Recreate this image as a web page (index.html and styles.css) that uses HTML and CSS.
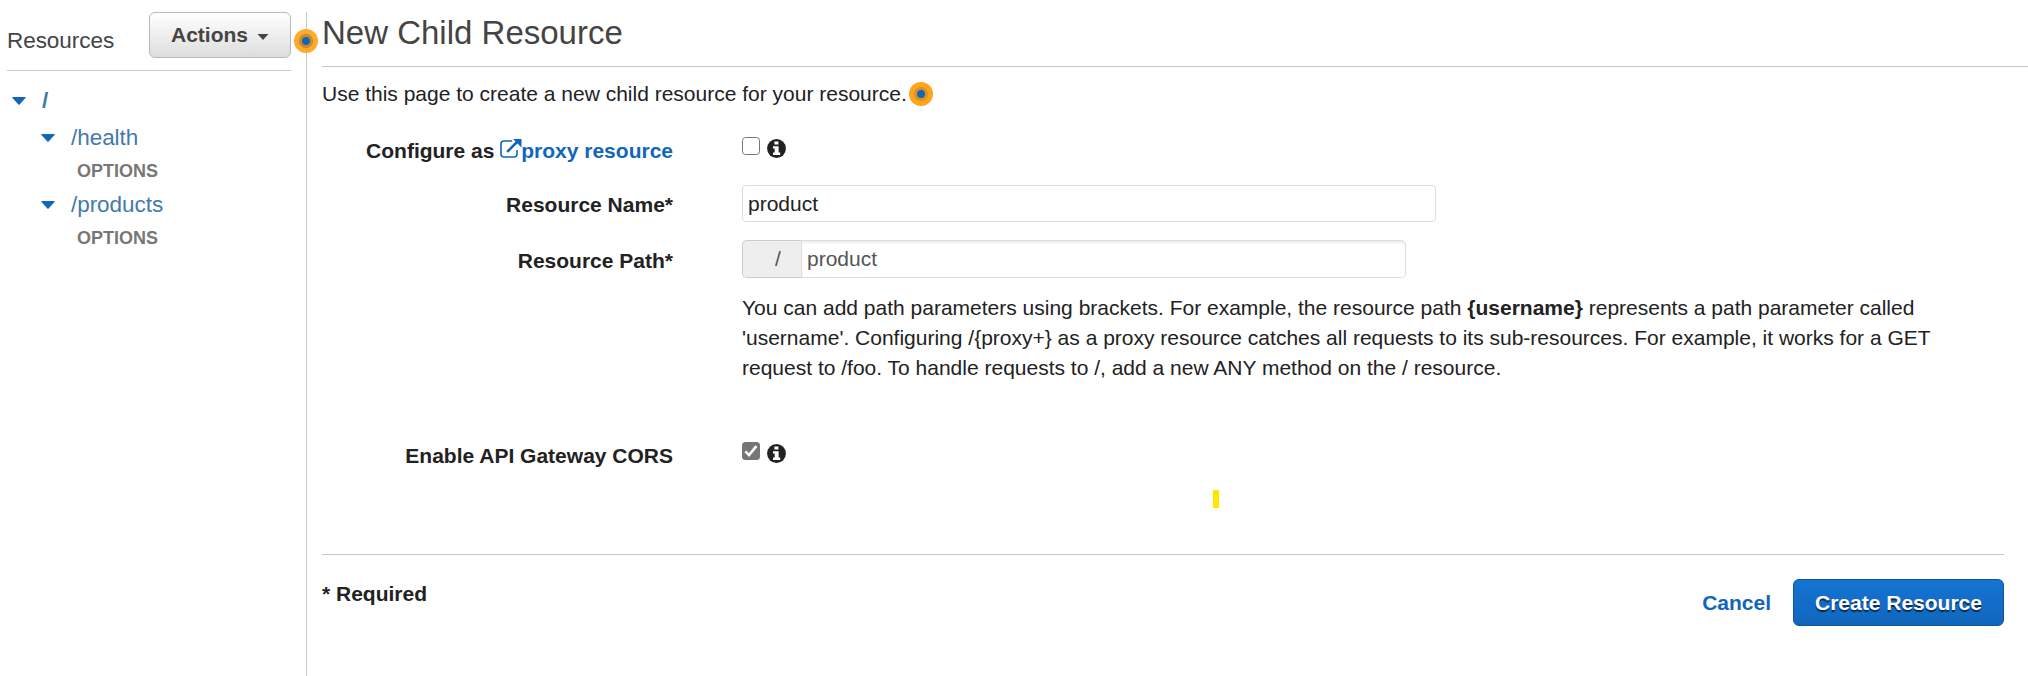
FILE: index.html
```html
<!DOCTYPE html>
<html lang="en">
<head>
<meta charset="utf-8">
<title>New Child Resource</title>
<link rel="stylesheet" href="styles.css">
</head>
<body>
<div class="app">
  <aside class="sidebar">
    <header class="sidebar-head">
      <span class="sidebar-title">Resources</span>
      <button class="actions" type="button">Actions <svg class="actions-caret" viewBox="0 0 12 6"><path d="M0.5 0h11L6 6z"/></svg></button>
    </header>
    <ul class="tree">
      <li class="node root"><svg class="caret" viewBox="0 0 14 8"><path d="M0.8 0h12.4q1 0 .3 .9L7.6 7.4q-.6.6-1.2 0L.5.9Q-.2 0 .8 0z"/></svg><span>/</span></li>
      <li class="node child"><svg class="caret" viewBox="0 0 14 8"><path d="M0.8 0h12.4q1 0 .3 .9L7.6 7.4q-.6.6-1.2 0L.5.9Q-.2 0 .8 0z"/></svg><span>/health</span></li>
      <li class="method">OPTIONS</li>
      <li class="node child"><svg class="caret" viewBox="0 0 14 8"><path d="M0.8 0h12.4q1 0 .3 .9L7.6 7.4q-.6.6-1.2 0L.5.9Q-.2 0 .8 0z"/></svg><span>/products</span></li>
      <li class="method">OPTIONS</li>
    </ul>
  </aside>
  <main class="main">
    <svg class="hotspot hotspot-edge" viewBox="0 0 24 24"><circle cx="12" cy="12" r="12" fill="#ffa92d"/><circle cx="12" cy="12" r="7.2" fill="#c98c2b"/><circle cx="12" cy="12" r="4" fill="#1166bb"/></svg>
    <h1 class="title">New Child Resource</h1>
    <p class="intro">Use this page to create a new child resource for your resource.<svg class="hotspot" viewBox="0 0 24 24"><circle cx="12" cy="12" r="12" fill="#ffa41c"/><circle cx="12" cy="12" r="7" fill="#dc9120"/><circle cx="12" cy="12" r="4" fill="#1166bb"/></svg></p>
    <form class="form">
      <div class="row row-proxy">
        <div class="label">Configure as <a class="link"><svg class="ext" viewBox="0 0 22 19"><path d="M12 2H4Q1 2 1 5v10q0 3 3 3h10q3 0 3-3v-4" fill="none" stroke="currentColor" stroke-width="1.6"/><path d="M7.2 12.8L17 3" fill="none" stroke="currentColor" stroke-width="2.6"/><path d="M13 0H21.5v8.5z" fill="currentColor"/></svg>proxy resource</a></div>
        <div class="checks"><span class="box"></span><svg class="info" viewBox="0 0 19 19"><circle cx="9.5" cy="9.5" r="9.4" fill="#222"/><path d="M7.4 2.4h4v3.2h-4zM6 7.2h5.6v6.2h1.6v2.6H6v-2.6h1.7V9.6H6z" fill="#fff"/></svg></div>
      </div>
      <div class="row row-name">
        <div class="label">Resource Name*</div>
        <div class="input">product</div>
      </div>
      <div class="row row-path">
        <div class="label">Resource Path*</div>
        <div class="group"><span class="addon">/</span><div class="input path">product</div></div>
      </div>
      <p class="help">You can add path parameters using brackets. For example, the resource path <b>{username}</b> represents a path parameter called 'username'. Configuring /{proxy+} as a proxy resource catches all requests to its sub-resources. For example, it works for a GET request to /foo. To handle requests to /, add a new ANY method on the / resource.</p>
      <div class="row row-cors">
        <div class="label">Enable API Gateway CORS</div>
        <div class="checks"><span class="box checked"><svg viewBox="0 0 18 18"><path d="M3.4 9.4l3.6 3.7 7.4-9" fill="none" stroke="#fff" stroke-width="2.6"/></svg></span><svg class="info" viewBox="0 0 19 19"><circle cx="9.5" cy="9.5" r="9.4" fill="#222"/><path d="M7.4 2.4h4v3.2h-4zM6 7.2h5.6v6.2h1.6v2.6H6v-2.6h1.7V9.6H6z" fill="#fff"/></svg></div>
      </div>
      <div class="mark"></div>
      <footer class="footer">
        <span class="required">* Required</span>
        <div class="buttons"><a class="link">Cancel</a><button class="create" type="button">Create Resource</button></div>
      </footer>
    </form>
  </main>
</div>
</body>
</html>
```
FILE: styles.css
```css
* { box-sizing: border-box; }
body {
  margin: 0;
  background: #fff;
  color: #222;
  font: 21px/30px "Liberation Sans", Arial, sans-serif;
}
svg { display: block; flex: none; }
button { font: inherit; font-weight: bold; margin: 0; }
.app { display: flex; height: 676px; padding-top: 12px; overflow: hidden; }

.sidebar { flex: none; width: 306px; padding: 0 15px 0 7px; }
.sidebar-head {
  display: flex;
  justify-content: space-between;
  height: 59px;
  border-bottom: 1px solid #c8c8c8;
}
.sidebar-title { font-size: 22.5px; letter-spacing: -0.05px; color: #444; padding-top: 14px; }
.actions {
  display: flex;
  align-items: center;
  gap: 10px;
  width: 142px;
  height: 46px;
  padding: 0 0 0 21px;
  color: #444;
  border: 1px solid #b8b8b8;
  border-radius: 6px;
  background: linear-gradient(#fff, #ddd);
}
.actions-caret { width: 12px; height: 6px; fill: #444; margin: 3px 0 0 -1px; }

.tree { list-style: none; margin: 12px 0 0; padding: 0; }
.node {
  display: flex;
  gap: 16px;
  height: 35px;
  font-size: 22.5px;
  line-height: 35px;
  color: #4479ab;
}
.root { height: 37px; padding-left: 5px; font-weight: bold; }
.child { padding-left: 34px; letter-spacing: -0.05px; }
.caret { width: 14px; height: 8px; margin-top: 14px; fill: #1166bb; }
.method {
  height: 32px;
  padding-left: 70px;
  font-size: 18px;
  line-height: 32px;
  font-weight: bold;
  color: #777;
}

.main {
  position: relative;
  flex: 1;
  padding-left: 15px;
  border-left: 1px solid #c8c8c8;
}
.hotspot { width: 24px; height: 24px; }
.hotspot-edge { position: absolute; left: -13px; top: 17px; }
.title {
  height: 55px;
  margin: 0;
  border-bottom: 1px solid #c8c8c8;
  font-size: 33px;
  line-height: 42px;
  font-weight: normal;
  color: #444;
}
.intro { display: flex; align-items: center; gap: 2px; margin: 12px 0 0; }
.form { width: 1682px; margin-top: 26px; }
.row { display: flex; gap: 69px; }
.label { flex: none; width: 351px; padding-top: 1px; text-align: right; font-weight: bold; }
.link { color: #1166bb; font-weight: bold; }
.ext { display: inline-block; width: 22px; height: 19px; margin-right: -1px; vertical-align: 0; }
.row-proxy { height: 50px; }
.row-name { height: 55px; }
.row-path { height: 53px; }
.row-name .label { padding-top: 5px; }
.row-path .label { padding-top: 6px; }
.checks { display: flex; gap: 7px; padding-top: 2px; }
.box {
  width: 18px;
  height: 18px;
  border: 1.5px solid #767676;
  border-radius: 3.5px;
}
.checked { border: 0; background: #767676; }
.info { width: 19px; height: 19px; margin-top: 2px; }
.input {
  width: 694px;
  height: 37px;
  padding: 3px 5px;
  border: 1px solid #ddd;
  border-radius: 4px;
}
.group { display: flex; }
.addon {
  width: 60px;
  height: 38px;
  padding: 3px 0 0 32px;
  color: #555;
  background: #eee;
  border: 1px solid #ccc;
  border-right-color: #ddd;
  border-radius: 5px 0 0 5px;
}
.path {
  width: 604px;
  height: 38px;
  color: #555;
  border-left: 0;
  border-radius: 0 5px 5px 0;
  box-shadow: inset 0 2px 2px rgba(0, 0, 0, .07);
}
.help { width: 1200px; margin: 0 0 0 420px; }
.row-cors { height: 50px; margin-top: 57px; }
.mark { width: 6px; height: 18px; margin-left: 891px; background: #ffe600; }
.footer {
  display: flex;
  justify-content: space-between;
  height: 72px;
  margin-top: 46px;
  padding-top: 24px;
  border-top: 1px solid #c8c8c8;
}
.required { font-weight: bold; }
.buttons { display: flex; align-items: center; gap: 22px; }
.create {
  width: 211px;
  height: 47px;
  padding: 0;
  color: #fff;
  text-shadow: 0 2px 1px rgba(0, 0, 0, .6);
  border: 1px solid #0d5499;
  border-radius: 6px;
  background: linear-gradient(#1574d4, #1166bb);
}
```
